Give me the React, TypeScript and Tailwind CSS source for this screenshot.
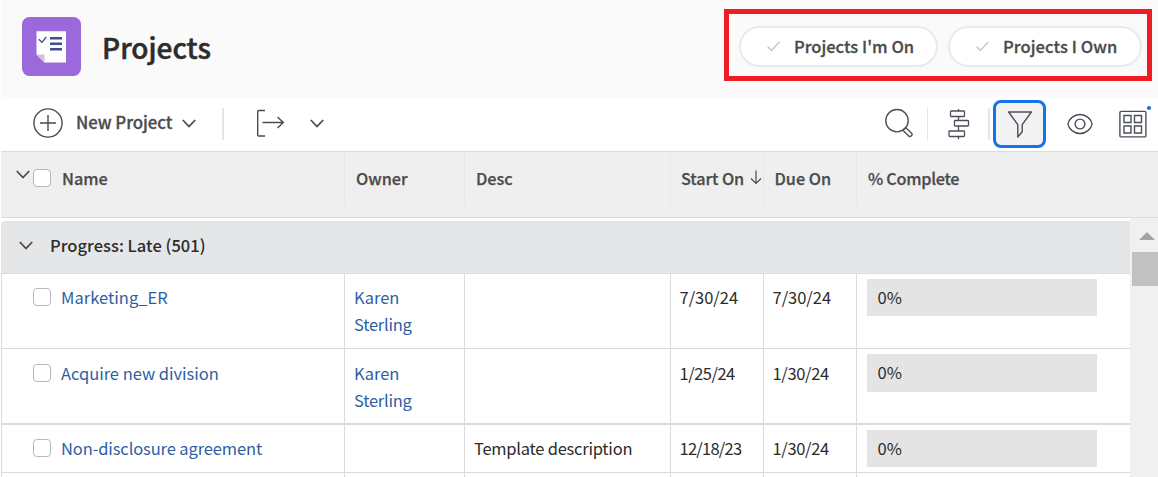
import type { ReactNode } from "react";

type Project = {
  name: string;
  nameClass: string;
  owner?: [string, string];
  desc?: string;
  start: string;
  startClass: string;
  due: string;
  dueClass: string;
  rowClass: string;
  cellClass: string;
  boxClass: string;
  barClass: string;
};

const projects: Project[] = [
  {
    name: "Marketing_ER",
    nameClass: "mt-[10px] tracking-[0.03px]",
    owner: ["Karen", "Sterling"],
    start: "7/30/24",
    startClass: "tracking-[-0.02px]",
    due: "7/30/24",
    dueClass: "tracking-[-0.02px]",
    rowClass: "h-[75px] border-b",
    cellClass: "pt-[10px]",
    boxClass: "mt-[14px]",
    barClass: "mt-[5px] h-[37px]",
  },
  {
    name: "Acquire new division",
    nameClass: "mt-[11px] tracking-[-0.03px]",
    owner: ["Karen", "Sterling"],
    start: "1/25/24",
    startClass: "tracking-[-0.5px]",
    due: "1/30/24",
    dueClass: "tracking-[-0.35px]",
    rowClass: "h-[76px] border-b-2",
    cellClass: "pt-[11px]",
    boxClass: "mt-[15px]",
    barClass: "mt-[5px] h-[38px]",
  },
  {
    name: "Non-disclosure agreement",
    nameClass: "mt-[10px] tracking-[-0.12px]",
    desc: "Template description",
    start: "12/18/23",
    startClass: "tracking-[-0.75px]",
    due: "1/30/24",
    dueClass: "tracking-[-0.35px]",
    rowClass: "h-[48px] border-b",
    cellClass: "pt-[10px]",
    boxClass: "mt-[14px]",
    barClass: "mt-[5px] h-[37px]",
  },
];

const columns =
  "grid grid-cols-[343px_120px_206px_93px_93px_1fr]";

function Chevron({ className = "" }: { className?: string }) {
  return (
    <svg className={"shrink-0 " + className} width="14" height="9" viewBox="0 0 14 9" fill="none" stroke="#4a4a4a" strokeWidth="1.8">
      <path d="M.8 1 7 7.5 13.2 1" />
    </svg>
  );
}

function Checkbox({ className = "" }: { className?: string }) {
  return <span className={"box-border block size-[18px] shrink-0 rounded-[4px] border border-[#b8b8b8] bg-white " + className} />;
}

function Pill({ children, className }: { children: ReactNode; className: string }) {
  return (
    <button className={"flex h-[41px] shrink-0 items-center rounded-full border-2 border-[#eaeaea] bg-white pl-[26px] text-[16.5px] font-medium text-[#4b4b4b] [-webkit-text-stroke:0.3px] " + className}>
      <svg className="mr-[14px] shrink-0" width="13" height="11" viewBox="0 0 13 11" fill="none" stroke="#bdbdc1" strokeWidth="1.2">
        <path d="M.7 5.8 4.5 9.5 12.4.8" />
      </svg>
      <span className="whitespace-nowrap">{children}</span>
    </button>
  );
}

function HeaderCell({ children, className = "pl-[11px]" }: { children: ReactNode; className?: string }) {
  return <div className={"flex h-[53px] items-center border-l border-[#e6e6e6] whitespace-nowrap " + className}>{children}</div>;
}

function Cell({ children, className = "" }: { children?: ReactNode; className?: string }) {
  return <div className={"border-l border-[#dcdcdc] leading-[26.5px] whitespace-nowrap " + className}>{children}</div>;
}

export default function App() {
  return (
    <div className="flex h-[477px] w-[1158px] flex-col overflow-hidden bg-white pl-px font-['Noto_Sans_CJK_SC',sans-serif] text-[16.5px] text-[#2c2c2c]">
      <header className="flex h-[97px] shrink-0 bg-[#fafafa]">
        <svg className="mt-[17px] ml-[21px] shrink-0" width="59" height="59" viewBox="0 0 59 59">
          <rect width="59" height="59" rx="7.5" fill="#9c69dd" />
          <path d="M14.5 14.3H44V45.5H22.5L14.5 37.5Z" fill="#fff" />
          <path d="M14.5 37.5H22.5V45.5Z" fill="#d3bce6" />
          <path d="m16.8 22.3 3.2 3 4.3-5.3" fill="none" stroke="#3d4b8f" strokeWidth="1.3" />
          <path d="M28 21.2H40M28 26.7H40M28 32.2H40" stroke="#414f93" strokeWidth="2.4" />
        </svg>
        <h1 className="mt-[26px] ml-[21px] text-[28px] leading-[42px] font-medium whitespace-nowrap [-webkit-text-stroke:0.5px]">Projects</h1>
        <div className="mt-[9px] mr-[6px] ml-auto flex h-[72px] w-[428px] items-center gap-[10px] border-[5px] border-[#ee1c25] pt-[2px] pl-[10px]">
          <Pill className="w-[199px] tracking-[0.02px]">Projects I'm On</Pill>
          <Pill className="w-[194px] tracking-[0.1px]">Projects I Own</Pill>
        </div>
      </header>

      <div className="flex h-[55px] shrink-0 border-b border-[#dcdcdc] bg-white">
        <svg className="mt-[11px] ml-[32px] shrink-0" width="30" height="30" viewBox="0 0 30 30" fill="none" stroke="#4b4b4b" strokeWidth="1.4">
          <circle cx="15" cy="15" r="14.1" />
          <path d="M15 7v16M7 15h16" />
        </svg>
        <span className="mt-[12px] ml-[13px] w-[98px] text-[16.75px] leading-[26px] font-medium tracking-[-0.03px] whitespace-nowrap text-[#4b4b4b] [-webkit-text-stroke:0.3px]">New Project</span>
        <Chevron className="mt-[22px] ml-[8px]" />
        <span className="mt-[11px] ml-[26px] h-[32px] w-[2px] bg-[#e6e6e6]" />
        <svg className="mt-[12px] ml-[32px] shrink-0" width="29" height="29" viewBox="0 0 29 29" fill="none" stroke="#4b4b4b" strokeWidth="1.4">
          <path d="M9 1.5H2.7q-1 0-1 1V26q0 1 1 1H9M6.5 13.5H27M21.5 8l5.8 5.5-5.8 5.5" />
        </svg>
        <Chevron className="mt-[22px] ml-[25px]" />

        <div className="ml-auto flex">
          <svg className="mt-[11px] shrink-0" width="30" height="30" viewBox="0 0 30 30" fill="none" stroke="#4b4f58" strokeWidth="1.4">
            <circle cx="13" cy="12.7" r="11.2" />
            <path d="m18.9 22.3 2.8-2.7 6.1 5.8q.9.9 0 1.8l-1 1q-.9.8-1.8 0Z" />
          </svg>
          <span className="mt-[11px] ml-[13px] h-[32px] w-px bg-[#e6e6e6]" />
          <svg className="mt-[11px] ml-[20px] shrink-0" width="22" height="32" viewBox="0 0 22 32" fill="none" stroke="#4b4f58" strokeWidth="1.3">
            <path d="M10.5 1v2M10.5 8.5v4M10.5 18v5M10.5 28.5v2.8" />
            <rect x="2.5" y="3" width="14" height="5.5" rx=".8" />
            <rect x="6.5" y="12.5" width="14" height="5.5" rx=".8" />
            <rect x="1" y="23" width="15.5" height="5.5" rx=".8" />
          </svg>
          <span className="mt-[11px] ml-[18px] h-[32px] w-[2px] bg-[#e6e6e6]" />
          <button className="mt-[3px] ml-[3px] flex h-[48px] w-[53px] items-center justify-center rounded-[8px] border-[3px] border-[#1473e6] bg-[#f3f3f3]">
            <svg width="26" height="29" viewBox="0 0 26 29" fill="none" stroke="#4b4f58" strokeWidth="1.4" strokeLinejoin="round">
              <path d="M1.6 2H24.4L15.2 14.7V21.8L10.8 27V14.7Z" />
            </svg>
          </button>
          <svg className="mt-[16px] ml-[21px] shrink-0" width="26" height="22" viewBox="0 0 26 22" fill="none" stroke="#4b4f58" strokeWidth="1.4">
            <path d="M.9 11C1.8 6 7 1.5 13 1.5S24.2 6 25.1 11C24.2 16 19 20.5 13 20.5S1.8 16 .9 11Z" />
            <circle cx="13" cy="11" r="4.9" />
          </svg>
          <svg className="mt-[8px] mr-[6px] ml-[26px] shrink-0" width="33" height="33" viewBox="0 0 33 33" fill="none" stroke="#4b4f58" strokeWidth="1.4">
            <rect x=".9" y="6.4" width="26" height="25.5" rx="1.2" />
            <path d="M5 10.5h7v7H5ZM15.5 10.5h7v7h-7ZM5 21h7v7H5ZM15.5 21h7v7h-7Z" />
            <circle cx="30" cy="3" r="2.1" fill="#1473e6" stroke="none" />
          </svg>
        </div>
      </div>

      <div className={columns + " h-[66px] shrink-0 border-b border-[#dcdcdc] bg-[#efefef] text-[16.25px] font-medium text-[#4b4b4b] [-webkit-text-stroke:0.25px]"}>
        <div className="flex">
          <Chevron className="mt-[18px] ml-[15px]" />
          <Checkbox className="mt-[17px] ml-[3px]" />
          <span className="mt-[13px] ml-[11px] leading-[26px]">Name</span>
        </div>
        <HeaderCell>Owner</HeaderCell>
        <HeaderCell>Desc</HeaderCell>
        <HeaderCell className="pl-[10px]">
          <span className="w-[63px] tracking-[-0.1px]">Start On</span>
          <svg className="mb-[3px] ml-[6px] shrink-0" width="12" height="15" viewBox="0 0 12 15" fill="none" stroke="#4b4b4b" strokeWidth="1.2">
            <path d="M6 .5V13.5M1 8.5l5 5 5-5" />
          </svg>
        </HeaderCell>
        <HeaderCell className="pl-[10.5px]">Due On</HeaderCell>
        <HeaderCell className="pl-[11px] tracking-[-0.3px]">% Complete</HeaderCell>
      </div>

      <div className="flex min-h-0 flex-1">
        <main className="mt-[3px] w-[1129px] shrink-0">
          <div className="flex h-[53px] items-center rounded-tl-[4px] border-b border-[#dcdcdc] bg-[#e5e6e8] pl-[18px]">
            <Chevron className="mb-[3px]" />
            <span className="mb-[3px] ml-[17px] text-[16.5px] font-medium tracking-[0.03px] whitespace-nowrap">Progress: Late (501)</span>
          </div>
          {projects.map((p) => (
            <div key={p.name} className={columns + " border-[#dcdcdc] " + p.rowClass}>
              <div className="flex border-l border-[#dcdcdc] pl-[31px]">
                <Checkbox className={p.boxClass} />
                <a className={"ml-[10px] leading-[26.5px] whitespace-nowrap text-[#2d5fa3] " + p.nameClass}>{p.name}</a>
              </div>
              <Cell className={"pl-[9px] tracking-[-0.24px] text-[#2d5fa3] " + p.cellClass}>
                {p.owner && (
                  <>
                    <span className="tracking-normal">{p.owner[0]}</span>
                    <br />
                    {p.owner[1]}
                  </>
                )}
              </Cell>
              <Cell className="pt-[10px] pl-[9px] tracking-[-0.24px]">{p.desc}</Cell>
              <Cell className={"pl-[8.5px] " + p.cellClass + " " + p.startClass}>{p.start}</Cell>
              <Cell className={"pl-[8.5px] " + p.cellClass + " " + p.dueClass}>{p.due}</Cell>
              <div className="border-l border-[#dcdcdc] pl-[10px]">
                <div className={"flex w-[230px] items-center bg-[#e4e4e4] pb-px pl-[10.5px] " + p.barClass}>0%</div>
              </div>
            </div>
          ))}
          <div className={columns + " h-[8px]"}>
            {[0, 1, 2, 3, 4, 5].map((i) => (
              <span key={i} className="border-l border-[#dcdcdc]" />
            ))}
          </div>
        </main>
        <aside className="flex flex-1 flex-col bg-[#f0f0f0] pl-[2px]">
          <svg className="mt-[14px] ml-[7px] shrink-0" width="16" height="8" viewBox="0 0 16 8">
            <path d="M0 8 8 0l8 8Z" fill="#a3a3a3" />
          </svg>
          <span className="mt-[12px] h-[34px] bg-[#c1c1c1]" />
        </aside>
      </div>
    </div>
  );
}
